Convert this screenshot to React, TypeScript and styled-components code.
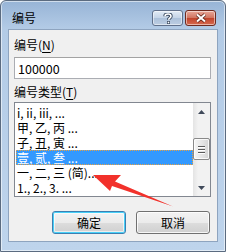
import React from 'react'
import styled, { createGlobalStyle } from 'styled-components'

const FONT = `'Noto Sans CJK SC', 'Noto Sans', sans-serif`

const items = ['i, ii, iii, ...', '甲, 乙, 丙 ...', '子, 丑, 寅 ...', '壹, 贰, 叁 ...', '一, 二, 三 (简)...', '1., 2., 3. ...']
const SELECTED = 3

export default function App() {
	return (
		<>
			<Global />
			<Window>
				<TitleBar>
					<Title>编号</Title>
					<Caption>
						<HelpBtn>
							<svg width='10' height='11' viewBox='0 0 10 11'>
								<path d='M2 3.2C2 1.6 3.3 1 5 1s3 .8 3 2.2c0 1.6-2.4 1.8-2.4 3.6' fill='none' stroke='#3a4a60' strokeWidth='3.4' />
								<path d='M2 3.2C2 1.6 3.3 1 5 1s3 .8 3 2.2c0 1.6-2.4 1.8-2.4 3.6' fill='none' stroke='#fff' strokeWidth='1.6' />
								<rect x='4' y='8' width='3' height='3' fill='#3a4a60' />
								<rect x='4.7' y='8.7' width='1.6' height='1.6' fill='#fff' />
							</svg>
						</HelpBtn>
						<CloseBtn>
							<svg width='12' height='10' viewBox='0 0 12 10'>
								<path d='M2 1.5l8 7M10 1.5l-8 7' stroke='#5a2218' strokeWidth='3.6' />
								<path d='M2 1.5l8 7M10 1.5l-8 7' stroke='#fff' strokeWidth='2' />
							</svg>
						</CloseBtn>
					</Caption>
				</TitleBar>
				<Client>
					<Label>
						编号(<u>N</u>)
					</Label>
					<Input>100000</Input>
					<Label2>
						编号类型(<u>T</u>)
					</Label2>
					<ListBox>
						<Rows>
							{items.map((t, i) => (
								<Row key={t} $selected={i === SELECTED}>
									{t}
								</Row>
							))}
						</Rows>
						<ScrollBar>
							<Arrow>
								<svg width='7' height='4' viewBox='0 0 7 4'>
									<path d='M0 4L3.5 0 7 4z' fill='#404a5a' />
								</svg>
							</Arrow>
							<Track>
								<Thumb>
									<Grip />
									<Grip />
									<Grip />
								</Thumb>
							</Track>
							<Arrow>
								<svg width='7' height='4' viewBox='0 0 7 4'>
									<path d='M0 0L3.5 4 7 0z' fill='#404a5a' />
								</svg>
							</Arrow>
						</ScrollBar>
					</ListBox>
					<Buttons>
						<Button $default>确定</Button>
						<Button>取消</Button>
					</Buttons>
				</Client>
				<Pointer width='226' height='252' viewBox='0 0 226 252'>
					<polygon points='93,175 121,175 115,181.5 173,206.5 112,186 110,191' fill='#f2312b' />
				</Pointer>
			</Window>
		</>
	)
}

const Global = createGlobalStyle`
	body {
		margin: 0;
		background: #fff;
		font-family: ${FONT};
	}
`

const Window = styled.div`
	position: relative;
	width: 226px;
	height: 252px;
	box-sizing: border-box;
	border: 1px solid #5b6b80;
	border-radius: 6px 6px 0 0;
	background: linear-gradient(#97b4d6, #b3cbe6 28px, #bed4ec);
	box-shadow: inset 0 0 0 1px rgba(255, 255, 255, 0.55);
	display: flex;
	flex-direction: column;
	padding: 0 7px 9px 7px;
	overflow: hidden;
`

const TitleBar = styled.div`
	height: 28px;
	display: flex;
	align-items: flex-start;
	justify-content: space-between;
`

const Title = styled.div`
	font-size: 12px;
	line-height: 16px;
	margin: 9px 0 0 4px;
	color: #000;
`

const Caption = styled.div`
	display: flex;
	gap: 2px;
	margin-top: 9px;
	margin-right: 2px;
`

const CapBtn = styled.div`
	height: 16px;
	box-sizing: border-box;
	border-radius: 3px;
	display: flex;
	align-items: center;
	justify-content: center;
	box-shadow: inset 0 0 0 1px rgba(255, 255, 255, 0.5);
`

const HelpBtn = styled(CapBtn)`
	width: 31px;
	border: 1px solid #60708a;
	background: linear-gradient(#e2ebf5, #c4d4e7 50%, #acc1da 51%, #bccde2);
`

const CloseBtn = styled(CapBtn)`
	width: 31px;
	border: 1px solid #6e2a1f;
	background: linear-gradient(#e9a899, #d0735f 50%, #c0432b 51%, #d66a4f);
`

const Client = styled.div`
	flex: 1;
	background: #f0f0f0;
	border: 1px solid #8ea4bf;
	padding: 7px 6px 7px 5px;
	display: flex;
	flex-direction: column;
	font-size: 12px;
	color: #000;
`

const Label = styled.div`
	line-height: 16px;
	margin-bottom: 4px;
	u {
		text-underline-offset: 2px;
	}
`

const Label2 = styled(Label)`
	margin: 5px 0 2px;
`

const Input = styled.div`
	height: 22px;
	box-sizing: border-box;
	border: 1px solid #abadb3;
	border-top-color: #a3a3a3;
	background: #fff;
	padding-left: 3px;
	display: flex;
	align-items: center;
	font-size: 12.5px;
`

const ListBox = styled.div`
	height: 95px;
	box-sizing: border-box;
	border: 1px solid #828790;
	background: #fff;
	display: flex;
	padding-left: 1px;
`

const Rows = styled.div`
	flex: 1;
	padding-top: 2px;
`

const Row = styled.div<{ $selected?: boolean }>`
	height: 15px;
	line-height: 15px;
	padding-left: 1px;
	box-sizing: border-box;
	white-space: nowrap;
	background: ${(p) => (p.$selected ? '#3399ff' : 'transparent')};
	color: ${(p) => (p.$selected ? '#fff' : '#000')};
	outline: ${(p) => (p.$selected ? '1px dotted #e8a040' : 'none')};
	outline-offset: -1px;
`

const ScrollBar = styled.div`
	width: 17px;
	display: flex;
	flex-direction: column;
	background: linear-gradient(90deg, #e4e4e4, #f2f2f2 30%, #f2f2f2);
`

const Arrow = styled.div`
	height: 17px;
	display: flex;
	align-items: center;
	justify-content: center;
`

const Track = styled.div`
	flex: 1;
	display: flex;
	flex-direction: column;
	padding-top: 18px;
`

const Thumb = styled.div`
	height: 22px;
	box-sizing: border-box;
	margin: 0 0 0 0;
	border: 1px solid #8a8a8a;
	border-radius: 2px;
	background: linear-gradient(90deg, #f6f6f6, #e6e6e6 50%, #d4d4d4);
	box-shadow: inset 0 0 0 1px rgba(255, 255, 255, 0.8);
	display: flex;
	flex-direction: column;
	align-items: center;
	justify-content: center;
	gap: 2px;
`

const Grip = styled.div`
	width: 7px;
	height: 1px;
	background: #5a5a5a;
	box-shadow: 0 1px 0 #fff;
`

const Buttons = styled.div`
	margin-top: auto;
	display: flex;
	justify-content: flex-end;
	gap: 10px;
	padding-right: 1px;
`

const Button = styled.div<{ $default?: boolean }>`
	width: 74px;
	height: 23px;
	box-sizing: border-box;
	border: 1px solid ${(p) => (p.$default ? '#3c7fb1' : '#707070')};
	border-radius: 3px;
	background: linear-gradient(#f2f2f2, #ebebeb 50%, #dddddd 51%, #cfcfcf);
	box-shadow: ${(p) =>
		p.$default ? 'inset 0 0 0 1px #48d0f8, inset 0 0 0 2px rgba(255,255,255,0.6)' : 'inset 0 0 0 1px rgba(255,255,255,0.8)'};
	display: flex;
	align-items: center;
	justify-content: center;
	font-size: 12px;
`

const Pointer = styled.svg`
	position: absolute;
	left: -1px;
	top: -1px;
	pointer-events: none;
`
